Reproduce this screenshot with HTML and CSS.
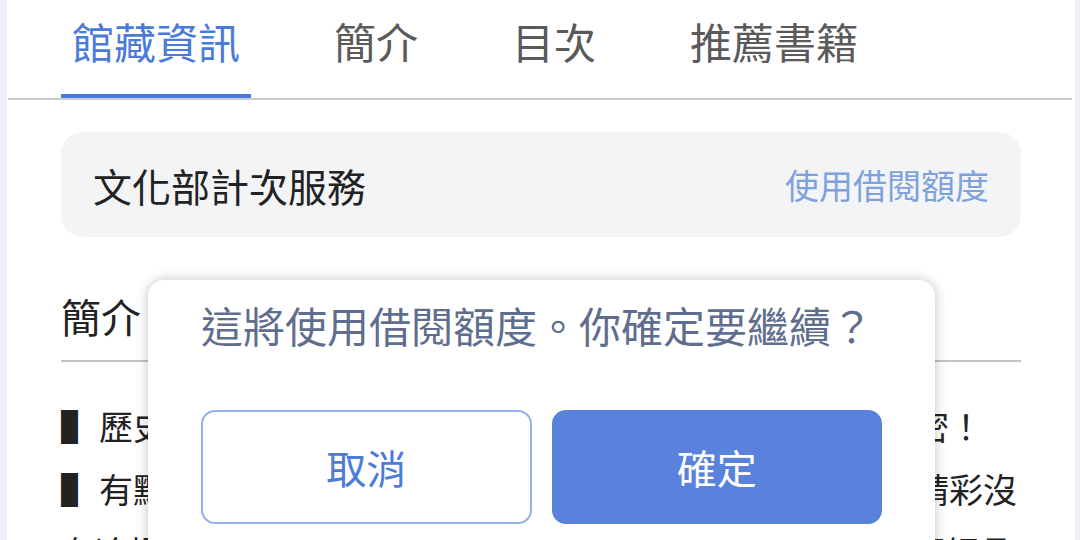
FILE: index.html
```html
<!DOCTYPE html>
<html lang="zh-Hant">
<head>
<meta charset="utf-8">
<title>館藏資訊</title>
<link rel="stylesheet" href="styles.css">
</head>
<body>
	<div class="page">
		<div class="tabs">
			<a class="tab active" href="javascript:;">館藏資訊</a>
			<a class="tab" href="javascript:;">簡介</a>
			<a class="tab" href="javascript:;">目次</a>
			<a class="tab" href="javascript:;">推薦書籍</a>
		</div>
		<div class="content">
			<div class="quota">
				<span class="quota-title">文化部計次服務</span>
				<a class="quota-link" href="javascript:;">使用借閱額度</a>
			</div>
			<h2 class="section-title">簡介</h2>
			<div class="intro">
				<p><span class="mark">▌</span>歷史上最有趣的故事，原來課本裡都沒有告訴過你的秘密！</p>
				<p><span class="mark">▌</span>有點歷史基礎的人看得津津有味，沒有基礎的人也覺得精彩沒有冷場，每個故事都能引發讀者的思考與熱烈討論，值得細細品味。</p>
			</div>
		</div>
	</div>

	<!-- 確認視窗 -->
	<div class="dialog">
		<p class="dialog-msg">這將使用借閱額度。你確定要繼續？</p>
		<div class="dialog-btns">
			<button class="btn btn-cancel">取消</button>
			<button class="btn btn-ok">確定</button>
		</div>
	</div>
</body>
</html>
```

FILE: styles.css
```css
body,p,h2{
	margin:0;
	padding:0;
}

body{
	background:#eef0f5;
	font-family:"Noto Sans CJK TC","Noto Sans",sans-serif;
	color:#222222;
	overflow:hidden;
}

a{
	text-decoration:none;
}

.page{
	margin:0 5px 0 7px;
	height:540px;
	background:#ffffff;
}

/* 分頁 */
.tabs{
	display:flex;
	gap:72px;
	margin:0 3px 0 1px;
	padding-left:53px;
	border-bottom:2px solid #cccccc;
}

.tab{
	padding:20px 11px 32px;
	font-size:42px;
	line-height:42px;
	color:#5a5a5a;
	border-bottom:4px solid transparent;
}

.tab.active{
	color:#4a7bd9;
	border-bottom-color:#4a7bd9;
}

.content{
	padding:0 54px;
}

/* 計次服務 */
.quota{
	display:flex;
	align-items:center;
	justify-content:space-between;
	height:105px;
	margin-top:32px;
	padding:0 32px;
	background:#f3f4f6;
	border-radius:22px;
}

.quota-title{
	font-size:39px;
	color:#222222;
}

.quota-link{
	font-size:34px;
	color:#7fa2de;
}

.section-title{
	margin-top:59px;
	padding-bottom:24px;
	font-size:40px;
	line-height:40px;
	font-weight:normal;
	border-bottom:2px solid #c4c4c4;
}

.intro{
	margin-top:32px;
	font-size:34px;
	line-height:63px;
}

.mark{
	display:inline-block;
	width:38px;
}

/* 確認視窗 */
.dialog{
	position:absolute;
	left:148px;
	top:280px;
	width:681px;
	height:300px;
	padding:24px 53px 0;
	background:#ffffff;
	border-radius:16px;
	box-shadow:0 0 12px rgba(0,0,0,0.25);
}

.dialog-msg{
	font-size:42px;
	line-height:42px;
	color:#5f6e8e;
	white-space:nowrap;
}

.dialog-btns{
	display:flex;
	gap:20px;
	margin-top:64px;
}

.btn{
	flex:1;
	height:114px;
	font-family:inherit;
	font-size:40px;
	border-radius:14px;
	cursor:pointer;
}

.btn-cancel{
	background:#ffffff;
	border:2px solid #8fb1ec;
	color:#4c7cd9;
}

.btn-ok{
	background:#5882dc;
	border:2px solid #5882dc;
	color:#ffffff;
}
```
